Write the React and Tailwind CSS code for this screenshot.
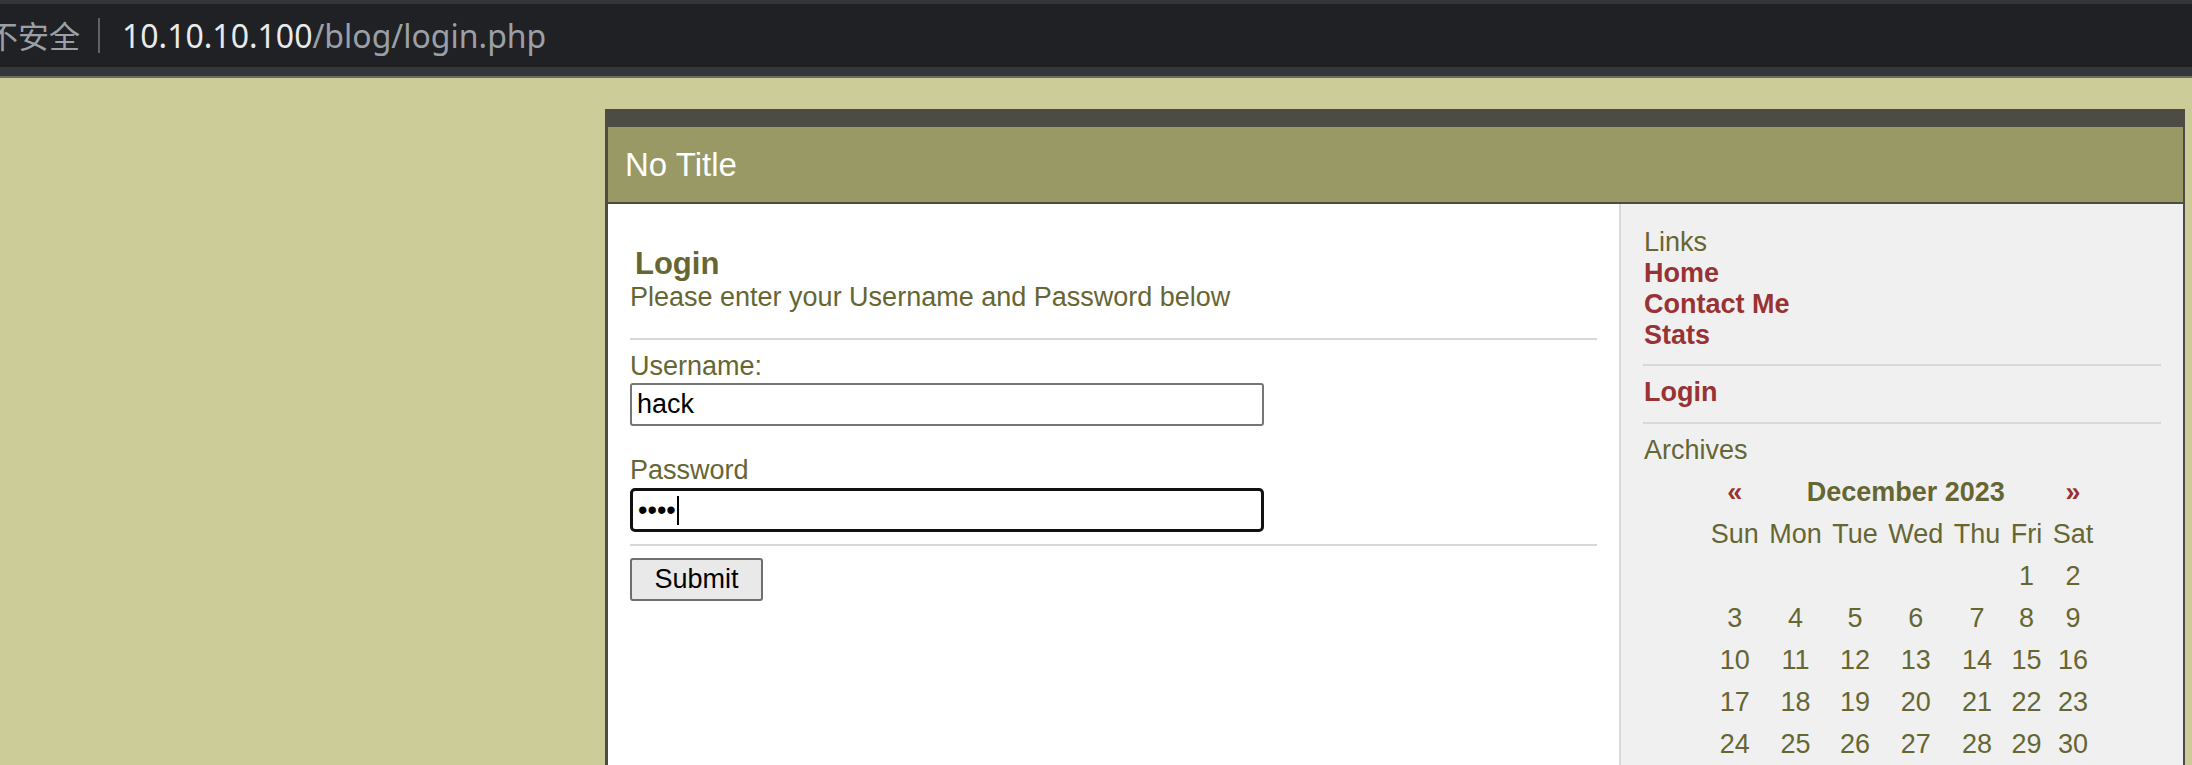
export default function App() {
  const days = ['Sun', 'Mon', 'Tue', 'Wed', 'Thu', 'Fri', 'Sat'];
  const weeks = [
    ['', '', '', '', '', '1', '2'],
    ['3', '4', '5', '6', '7', '8', '9'],
    ['10', '11', '12', '13', '14', '15', '16'],
    ['17', '18', '19', '20', '21', '22', '23'],
    ['24', '25', '26', '27', '28', '29', '30'],
    ['31', '', '', '', '', '', ''],
  ];
  return (
    <div className="w-[2192px] h-[765px] overflow-hidden bg-[#cccc99] flex flex-col font-['Liberation_Sans',Arial,sans-serif]">
      {/* browser chrome */}
      <div className="h-[4px] shrink-0 bg-[#35363a]" />
      <div className="h-[63px] shrink-0 bg-[#202124] flex items-center whitespace-nowrap font-['Noto_Sans','Noto_Sans_CJK_SC',sans-serif] text-[32px]">
        <span className="ml-[-13px] text-[#9aa0a6] text-[31px] font-['Noto_Sans_CJK_SC',sans-serif]">不安全</span>
        <span className="ml-[18px] w-[2px] h-[35px] bg-[#5f6368]" />
        <span className="ml-[22px] text-[#e8eaed]">10.10.10.100</span>
        <span className="text-[#9aa0a6]">/blog/login.php</span>
      </div>
      <div className="h-[9px] shrink-0 bg-[#35363a]" />
      <div className="h-[2px] shrink-0 bg-[#6b6c60]" />

      {/* page */}
      <div className="flex-1 flex justify-end pt-[31px] pr-[7px] min-h-0">
        <div className="w-[1580px] bg-[#4c4c44] pt-[18px] pl-[3px] pr-[2px] flex flex-col">
          <div className="h-[75px] shrink-0 bg-[#999966] flex items-center pl-[17px] text-white text-[33px]">
            No Title
          </div>
          <div className="h-[2px] shrink-0" />
          <div className="flex flex-1">
            {/* main */}
            <div className="flex-1 bg-white pl-[22px] pr-[22px] pt-[42px] text-[#666633] text-[27px] leading-[31px]">
              <h2 className="ml-[5px] text-[31px] leading-[36px] font-bold">Login</h2>
              <p>Please enter your Username and Password below</p>
              <div className="mt-[25px] h-[2px] bg-[#d8d8d8]" />
              <div className="mt-[11px]">Username:</div>
              <div className="mt-[1px] w-[634px] h-[43px] border-2 border-[#767676] rounded-[3px] bg-white flex items-center pl-[5px] text-black">
                hack
              </div>
              <div className="mt-[29px]">Password</div>
              <div className="mt-[2px] w-[634px] h-[44px] border-[3px] border-[#111111] rounded-[5px] bg-white flex items-center pl-[5px] text-black">
                <span>••••</span>
                <span className="ml-[1px] w-[2px] h-[29px] bg-black" />
              </div>
              <div className="mt-[12px] h-[2px] bg-[#d8d8d8]" />
              <button className="mt-[12px] w-[133px] h-[43px] bg-[#e9e9e9] border-2 border-[#6f6f6f] rounded-[3px] text-black text-[27px] leading-[31px] flex items-center justify-center">
                Submit
              </button>
            </div>

            {/* sidebar */}
            <div className="w-[564px] shrink-0 bg-[#f0f0f0] border-l-2 border-[#d8d8d8] px-[22px] pt-[23px] text-[27px] leading-[31px] text-[#666633]">
              <div className="pl-[1px]">Links</div>
              <div className="pl-[1px] font-bold text-[#993333]">Home</div>
              <div className="pl-[1px] font-bold text-[#993333]">Contact Me</div>
              <div className="pl-[1px] font-bold text-[#993333]">Stats</div>
              <div className="mt-[13px] h-[2px] bg-[#d8d8d8]" />
              <div className="mt-[11px] pl-[1px] font-bold text-[#993333]">Login</div>
              <div className="mt-[14px] h-[2px] bg-[#d8d8d8]" />
              <div className="mt-[11px] pl-[1px]">Archives</div>
              <table className="mt-[5px] mx-auto border-collapse">
                <tbody>
                  <tr>
                    <td className="h-[42px] p-0 px-[5.25px] text-center font-bold text-[#993333]">«</td>
                    <td colSpan={5} className="h-[42px] p-0 px-[5.25px] text-center font-bold">December 2023</td>
                    <td className="h-[42px] p-0 px-[5.25px] text-center font-bold text-[#993333]">»</td>
                  </tr>
                  <tr>
                    {days.map((d) => (
                      <td key={d} className="h-[42px] p-0 px-[5.25px] text-center">{d}</td>
                    ))}
                  </tr>
                  {weeks.map((w, i) => (
                    <tr key={i}>
                      {w.map((d, j) => (
                        <td key={j} className="h-[42px] p-0 px-[5.25px] text-center">{d}</td>
                      ))}
                    </tr>
                  ))}
                </tbody>
              </table>
            </div>
          </div>
        </div>
      </div>
    </div>
  );
}
